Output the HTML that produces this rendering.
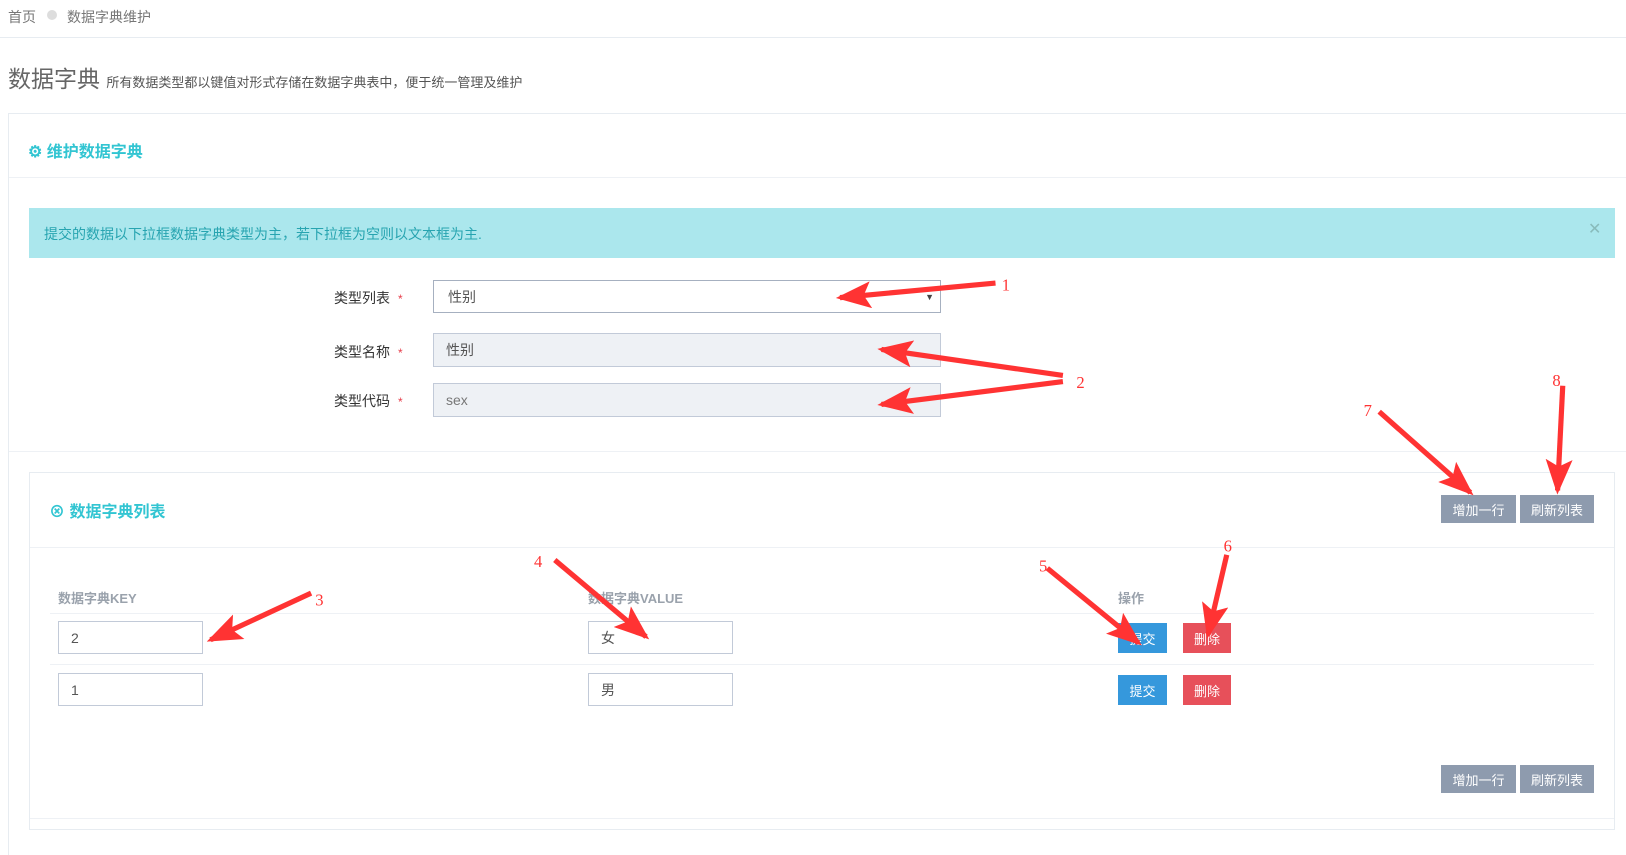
<!DOCTYPE html>
<html style="overflow:hidden;height:855px"><head><meta charset="utf-8"><style>
*{margin:0;padding:0;box-sizing:border-box}
body{width:1626px;height:855px;background:#fff;position:relative;overflow:hidden;font-family:"Liberation Sans","Noto Sans CJK SC",sans-serif;color:#333;font-size:14px}
.a{position:absolute}
.inp{position:absolute;border:1px solid #c2cad8;background:#fff;font-size:14px;color:#555;padding-left:14px;display:flex;align-items:center}
.ro{background:#eef1f5}
.btn{position:absolute;color:#fff;font-size:13px;display:flex;align-items:center;justify-content:center}
.g{background:#8e9bae}.b{background:#3598dc}.r{background:#e7505a}
.lbl{position:absolute;font-size:14px;color:#333}
.lbl i{font-style:normal;color:#e73d4a;margin-left:8px;font-size:12px}
.th{position:absolute;font-size:13px;color:#9aa2ac;font-weight:bold}
.hl{position:absolute;height:1px;background:#eef1f5}
</style></head><body>
<div class="a" style="left:8px;top:7px;font-size:14px;color:#777">首页</div>
<div class="a" style="left:47px;top:10px;width:10px;height:10px;border-radius:50%;background:#ddd"></div>
<div class="a" style="left:67px;top:7px;font-size:14px;color:#777">数据字典维护</div>
<div class="hl" style="left:0;top:37px;width:1626px;background:#e7ecf1"></div>
<div class="a" style="left:8px;top:60px;font-size:23px;color:#666;white-space:nowrap">数据字典 <span style="font-size:13px;color:#555">所有数据类型都以键值对形式存储在数据字典表中，便于统一管理及维护</span></div>
<div class="a" style="left:8px;top:113px;width:1630px;height:750px;border:1px solid #e7ecf1"></div>
<div class="a" style="left:28px;top:138px;font-size:16px;font-weight:bold;color:#32c5d2">⚙ 维护数据字典</div>
<div class="hl" style="left:9px;top:177px;width:1617px"></div>
<div class="a" style="left:29px;top:208px;width:1586px;height:50px;background:#abe7ed;color:#27a4b0;font-size:14px;padding:16px 15px">提交的数据以下拉框数据字典类型为主，若下拉框为空则以文本框为主.</div>
<div class="a" style="left:1588px;top:219px;color:#8bb;font-size:16px">✕</div>
<div class="lbl" style="left:334px;top:288px">类型列表<i>*</i></div>
<div class="inp" style="left:433px;top:280px;width:508px;height:33px;border-color:#a6b0c0">性别<span style="position:absolute;right:6px;font-size:9px;color:#444">▼</span></div>
<div class="lbl" style="left:334px;top:342px">类型名称<i>*</i></div>
<div class="inp ro" style="left:433px;top:333px;width:508px;height:34px;padding-left:12px">性别</div>
<div class="lbl" style="left:334px;top:391px">类型代码<i>*</i></div>
<div class="inp ro" style="left:433px;top:383px;width:508px;height:34px;padding-left:12px;color:#777">sex</div>
<div class="hl" style="left:9px;top:451px;width:1617px"></div>
<div class="a" style="left:29px;top:472px;width:1586px;height:358px;border:1px solid #e7ecf1"></div>
<div class="a" style="left:49px;top:498px;font-size:16px;font-weight:bold;color:#32c5d2">⊗ 数据字典列表</div>
<div class="hl" style="left:30px;top:547px;width:1584px"></div>
<div class="btn g" style="left:1441px;top:495px;width:75px;height:28px">增加一行</div>
<div class="btn g" style="left:1520px;top:495px;width:74px;height:28px">刷新列表</div>
<div class="th" style="left:58px;top:588px">数据字典KEY</div>
<div class="th" style="left:588px;top:588px">数据字典VALUE</div>
<div class="th" style="left:1118px;top:588px">操作</div>
<div class="hl" style="left:50px;top:613px;width:1544px"></div>
<div class="hl" style="left:50px;top:664px;width:1544px"></div>
<div class="inp" style="left:58px;top:621px;width:145px;height:33px;padding-left:12px">2</div>
<div class="inp" style="left:588px;top:621px;width:145px;height:33px;padding-left:12px">女</div>
<div class="inp" style="left:58px;top:673px;width:145px;height:33px;padding-left:12px">1</div>
<div class="inp" style="left:588px;top:673px;width:145px;height:33px;padding-left:12px">男</div>
<div class="btn b" style="left:1118px;top:623px;width:49px;height:30px">提交</div>
<div class="btn r" style="left:1183px;top:623px;width:48px;height:30px">删除</div>
<div class="btn b" style="left:1118px;top:675px;width:49px;height:30px">提交</div>
<div class="btn r" style="left:1183px;top:675px;width:48px;height:30px">删除</div>
<div class="btn g" style="left:1441px;top:765px;width:75px;height:28px">增加一行</div>
<div class="btn g" style="left:1520px;top:765px;width:74px;height:28px">刷新列表</div>
<div class="hl" style="left:30px;top:818px;width:1584px"></div>
<svg class="a" style="left:0;top:0" width="1626" height="855" viewBox="0 0 1568 824.5" preserveAspectRatio="none">
<defs><marker id="m" markerUnits="userSpaceOnUse" markerWidth="34" markerHeight="26" refX="30" refY="13" orient="auto"><path d="M0,0 L34,13 L0,26 L7,13 Z" fill="#f33"/></marker></defs>
<g stroke="#f33" stroke-width="5" marker-end="url(#m)">
<line x1="960" y1="273" x2="810" y2="287"/>
<line x1="1025" y1="362" x2="850" y2="337"/>
<line x1="1025" y1="368" x2="850" y2="390"/>
<line x1="300" y1="572" x2="203" y2="617"/>
<line x1="535" y1="540" x2="623" y2="614"/>
<line x1="1010" y1="548" x2="1098" y2="620"/>
<line x1="1183" y1="535" x2="1165" y2="612"/>
<line x1="1330" y1="397" x2="1418" y2="475"/>
<line x1="1507" y1="372" x2="1502" y2="473"/>
</g>
<g fill="#f33" font-size="16" font-family="Liberation Serif,serif">
<text x="966" y="280">1</text><text x="1038" y="374">2</text><text x="304" y="584">3</text><text x="515" y="547">4</text><text x="1002" y="551">5</text><text x="1180" y="532">6</text><text x="1315" y="401">7</text><text x="1497" y="372">8</text>
</g></svg>
</body></html>
